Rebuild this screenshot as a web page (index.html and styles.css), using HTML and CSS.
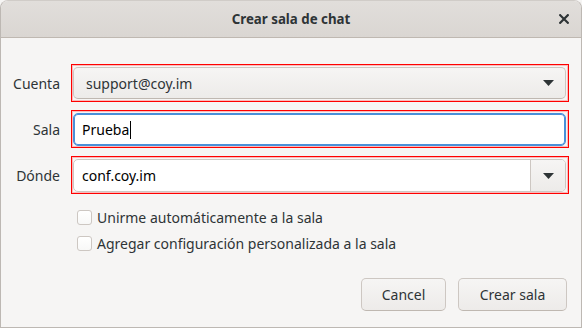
FILE: index.html
```html
<!DOCTYPE html>
<html lang="es">
<head>
<meta charset="utf-8">
<title>Crear sala de chat</title>
<link rel="stylesheet" href="styles.css">
</head>
<body>
<div class="window">
  <header class="titlebar">
    <span class="title">Crear sala de chat</span>
    <span class="close" aria-label="Cerrar">
      <svg width="10" height="10" viewBox="0 0 10 10"><path d="M1.2 1.2 L8.8 8.8 M8.8 1.2 L1.2 8.8" stroke="#2e3436" stroke-width="2.2" stroke-linecap="square" fill="none"/></svg>
    </span>
  </header>
  <main class="content">
    <div class="form">
      <label class="label">Cuenta</label>
      <div class="invalid">
        <div class="combo">
          <span class="combo-text">support@coy.im</span>
          <svg class="arrow" width="11" height="6" viewBox="0 0 11 6"><path d="M0 0 H11 L5.5 6 Z" fill="#2e3436"/></svg>
        </div>
      </div>
      <label class="label">Sala</label>
      <div class="invalid">
        <div class="entry focused"><span>Prueba</span><span class="caret"></span></div>
      </div>
      <label class="label">Dónde</label>
      <div class="invalid">
        <div class="entry-combo">
          <div class="entry-part">conf.coy.im</div>
          <div class="combo-btn">
            <svg class="arrow" width="11" height="6" viewBox="0 0 11 6"><path d="M0 0 H11 L5.5 6 Z" fill="#2e3436"/></svg>
          </div>
        </div>
      </div>
    </div>
    <div class="checks">
      <div class="check"><span class="box"></span><span>Unirme automáticamente a la sala</span></div>
      <div class="check"><span class="box"></span><span>Agregar configuración personalizada a la sala</span></div>
    </div>
    <div class="actions">
      <div class="btn btn-cancel">Cancel</div>
      <div class="btn btn-create">Crear sala</div>
    </div>
  </main>
</div>
</body>
</html>
```
FILE: styles.css
```css
* { box-sizing: border-box; }
html, body { margin: 0; padding: 0; }
body {
  width: 582px;
  height: 328px;
  background: #f6f5f4;
  font-family: "Noto Sans", "DejaVu Sans", sans-serif;
  font-size: 14px;
  color: #2e3436;
  overflow: hidden;
}
.window {
  width: 582px;
  height: 328px;
  border: 1px solid #bdb8b3;
  border-top-color: #d0ccc8;
  border-radius: 8px 8px 0 0;
  display: flex;
  flex-direction: column;
  background: #f6f5f4;
  overflow: hidden;
}
.titlebar {
  height: 37px;
  flex: none;
  background: linear-gradient(#e1dedb, #dad6d2);
  border-bottom: 1px solid #bfb8b1;
  display: flex;
  align-items: center;
  justify-content: center;
  position: relative;
}
.title {
  font-weight: 700;
  font-size: 13.3px;
  color: #2e3436;
}
.close {
  position: absolute;
  right: 12px;
  top: 13px;
  width: 10px;
  height: 10px;
  display: flex;
}
.content {
  flex: 1;
  display: flex;
  flex-direction: column;
  padding: 26px 12px 16px 12px;
}
.form {
  display: grid;
  grid-template-columns: 47px 1fr;
  column-gap: 11px;
  row-gap: 8px;
  align-items: center;
}
.label {
  text-align: right;
  color: #2e3436;
}
.invalid {
  border: 1px solid #ff0000;
  box-shadow: inset 0 0 0 1px rgba(255, 80, 80, 0.35);
  padding: 2px 2px 2px 1px;
  height: 38px;
}
.combo {
  height: 32px;
  border: 1px solid #cdc7c2;
  border-bottom-color: #bfb8b1;
  border-radius: 5px;
  background: linear-gradient(#f6f5f4, #edebe9);
  display: flex;
  align-items: center;
  padding: 0 11px 0 12px;
}
.combo-text { flex: 1; color: #2e3436; }
.arrow { display: block; }
.entry {
  height: 33px;
  border: 1px solid #cdc7c2;
  border-radius: 5px;
  background: #ffffff;
  display: flex;
  align-items: center;
  padding: 0 8px;
  color: #000;
}
.entry.focused {
  border-color: #4a90d9;
  box-shadow: inset 0 0 0 1px #4a90d9;
}
.caret {
  display: inline-block;
  width: 1px;
  height: 18px;
  background: #000;
  margin-left: 1px;
}
.entry-combo {
  height: 33px;
  display: flex;
  border: 1px solid #cdc7c2;
  border-radius: 5px;
  overflow: hidden;
  background: #fff;
}
.entry-part {
  flex: 1;
  display: flex;
  align-items: center;
  padding: 0 8px;
  color: #000;
}
.combo-btn {
  width: 35px;
  border-left: 1px solid #cdc7c2;
  background: linear-gradient(#f6f5f4, #edebe9);
  display: flex;
  align-items: center;
  justify-content: center;
  padding-left: 1px;
}
.checks {
  margin-top: 12px;
  padding-left: 64px;
  display: flex;
  flex-direction: column;
  gap: 4px;
}
.check {
  display: flex;
  align-items: center;
  height: 22px;
  gap: 5px;
  color: #2e3436;
}
.box {
  width: 15px;
  height: 15px;
  border: 1px solid #cdc7c2;
  border-radius: 3px;
  background: linear-gradient(#ffffff, #f8f8f7);
  flex: none;
}
.actions {
  margin-top: auto;
  display: flex;
  justify-content: flex-end;
  gap: 12px;
  padding-right: 2px;
}
.btn {
  height: 33px;
  padding: 0;
  white-space: nowrap;
  border: 1px solid #cdc7c2;
  border-bottom-color: #bfb8b1;
  border-radius: 5px;
  background: linear-gradient(#f6f5f4, #edebe9);
  display: flex;
  align-items: center;
  justify-content: center;
  color: #2e3436;
}
.btn-cancel { width: 85px; }
.btn-create { width: 109px; }
```
